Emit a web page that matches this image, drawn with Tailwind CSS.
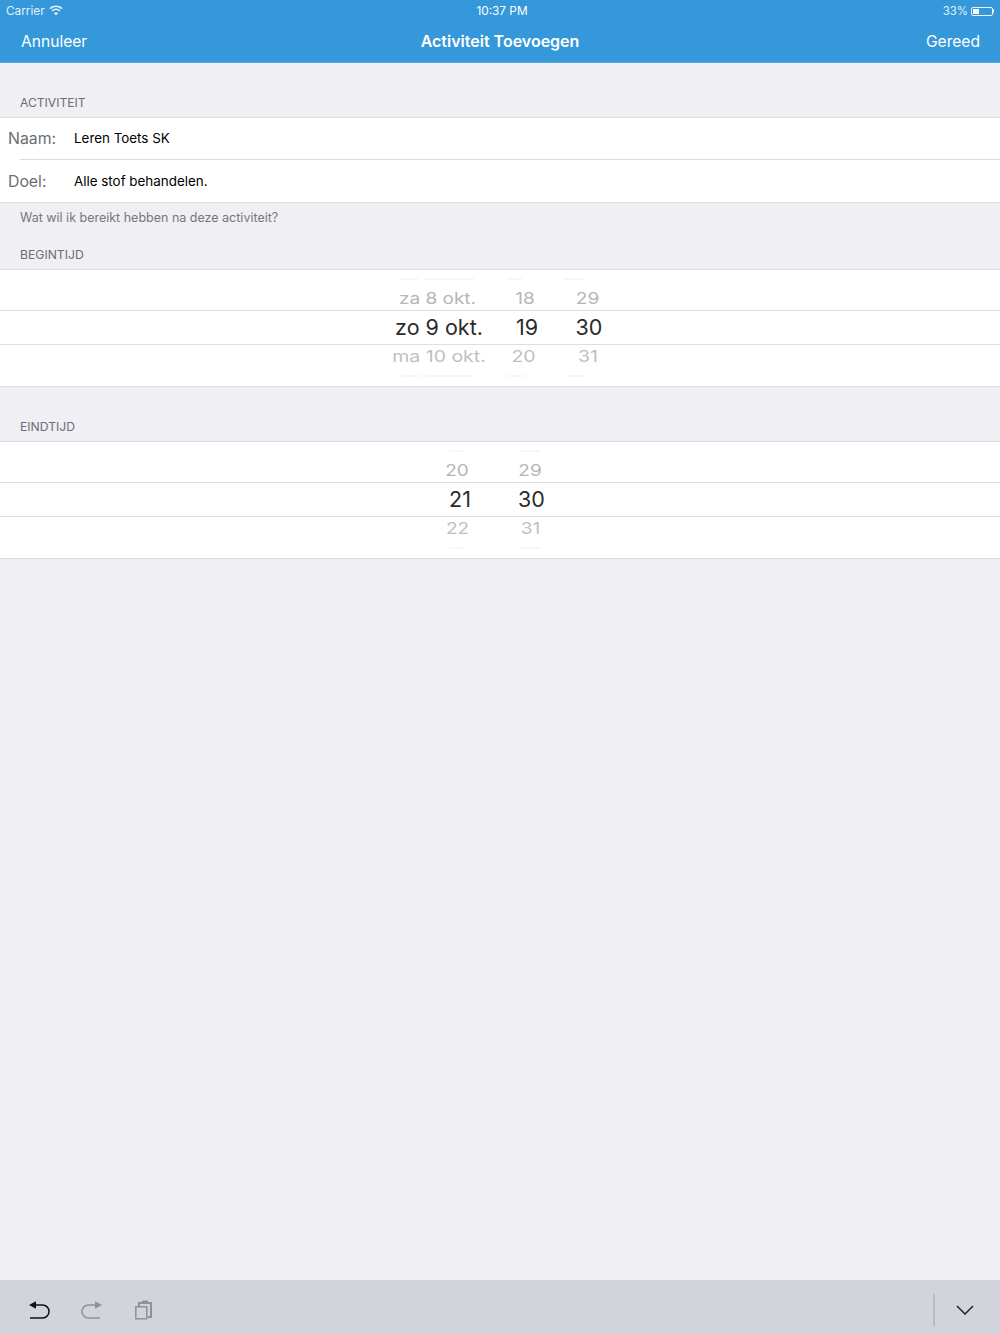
<!DOCTYPE html>
<html lang="en">
<head>
    <meta charset="UTF-8" />
    <title>Activiteit Toevoegen</title>
    <script src="https://cdn.jsdelivr.net/npm/@tailwindcss/browser@4"></script>
</head>
<body class="bg-[#efeff4] font-['Inter','Liberation_Sans',sans-serif]">
<div class="w-[1000px] h-[1334px] flex flex-col overflow-hidden">
    <!-- nav bar -->
    <header class="bg-[#3498db] h-[63px] shrink-0 text-white border-b border-[#5ba9e0]">
        <div class="h-[22px] grid grid-cols-3 items-center pl-[6px] pr-[6px] text-[11.8px] leading-[20px] text-[#e3f0fa]">
            <div class="flex items-center gap-[4px]">
                <span>Carrier</span>
                <svg width="14" height="11" viewBox="0 0 14 11" fill="none" stroke="#e8f3fb" stroke-width="1.5" class="-mt-[2px]">
                    <path d="M1 3.6C4.5.6 9.500.6 13 3.600" />
                    <path d="M3.100 5.800c2.400-2 5.400-2 7.800 0" />
                    <path d="M7 10.500 5 8c1.200-.9 2.800-.9 4 0z" fill="#e8f3fb" stroke="none" />
                </svg>
            </div>
            <div class="text-center text-white pl-[4px]">10:37 PM</div>
            <div class="flex items-center justify-end gap-[3px]">
                <span class="text-[11.4px]">33%</span>
                <div class="w-[22px] h-[9px] border border-[#e8f3fb] rounded-[2px] p-[1px]">
                    <div class="w-[6px] h-full bg-white"></div>
                </div>
                <div class="w-[1px] h-[4px] bg-[#e8f3fb] -ml-[3px]"></div>
            </div>
        </div>
        <div class="h-[38px] grid grid-cols-3 items-center px-[20px] text-[15.6px]">
            <div class="pl-[1px] pt-[2px]">Annuleer</div>
            <div class="text-center text-[16px] font-semibold whitespace-nowrap">Activiteit Toevoegen</div>
            <div class="text-right pt-[2px]">Gereed</div>
        </div>
    </header>

    <main class="flex-1">
        <div class="pt-[32px] pl-[20px] h-[54px] text-[12.1px] leading-[16px] text-[#6d6d72]">ACTIVITEIT</div>
        <section class="bg-white border-y border-[#dcdce0]">
            <div class="h-[42px] flex items-center pl-[8px] pb-[2px] relative">
                <span class="w-[66px] pt-[2px] text-[15.8px] text-[#6d6d72]">Naam:</span>
                <span class="text-[13.4px] text-black">Leren Toets SK</span>
                <div class="absolute left-[20px] right-0 bottom-0 h-px bg-[#dcdce0]"></div>
            </div>
            <div class="h-[42px] flex items-center pl-[8px]">
                <span class="w-[66px] pt-[2px] text-[15.8px] text-[#6d6d72]">Doel:</span>
                <span class="text-[13.4px] text-black">Alle stof behandelen.</span>
            </div>
        </section>
        <div class="h-[30px] pl-[20px] pt-[7px] text-[12.5px] leading-[16px] text-[#77777c]">Wat wil ik bereikt hebben na deze activiteit?</div>

        <div class="h-[36px] pt-[14px] pl-[20px] text-[12.2px] leading-[16px] text-[#6d6d72]">BEGINTIJD</div>
        <section class="bg-white border-y border-[#dcdce0] h-[118px] flex flex-col overflow-hidden">
            <div class="h-[40px] shrink-0 flex flex-col pt-[8px] text-[19px] leading-[24px] text-[#b5b5b8]">
                <div class="h-[2px] shrink-0 pl-[400px] flex gap-[6px]">
                    <div class="w-[18px] bg-[#f7f7f8]"></div>
                    <div class="w-[50px] bg-[#f7f7f8]"></div>
                    <div class="w-[16px] ml-[26px] bg-[#f7f7f8]"></div>
                    <div class="w-[20px] ml-[36px] bg-[#f7f7f8]"></div>
                </div>
                <div class="mt-[7px] shrink-0 pl-[377px] grid grid-cols-[121px_54px_71px]">
                    <span class="text-center scale-y-[0.85]">za 8 okt.</span>
                    <span class="text-center scale-y-[0.85]">18</span>
                    <span class="text-center scale-y-[0.85]">29</span>
                </div>
            </div>
            <div class="h-[35px] shrink-0 border-y border-[#dedee2] pl-[380px] grid grid-cols-[118px_58px_66px] items-center text-[21.5px] text-[#2b2b2d]">
                <span class="text-center">zo 9 okt.</span>
                <span class="text-center">19</span>
                <span class="text-center">30</span>
            </div>
            <div class="h-[41px] shrink-0 flex flex-col text-[19.5px] leading-[24px] text-[#c0c0c3]">
                <div class="-mt-[1px] pl-[380px] grid grid-cols-[118px_51px_78px]">
                    <span class="text-center scale-y-[0.85]">ma 10 okt.</span>
                    <span class="text-center scale-y-[0.85]">20</span>
                    <span class="text-center scale-y-[0.85]">31</span>
                </div>
                <div class="mt-[7px] h-[2px] shrink-0 pl-[402px] flex gap-[6px]">
                    <div class="w-[18px] bg-[#f7f7f8]"></div>
                    <div class="w-[48px] bg-[#f7f7f8]"></div>
                    <div class="w-[16px] ml-[28px] bg-[#f7f7f8]"></div>
                    <div class="w-[20px] ml-[36px] bg-[#f7f7f8]"></div>
                </div>
            </div>
        </section>

        <div class="h-[54px] pt-[32px] pl-[20px] text-[12.2px] leading-[16px] text-[#6d6d72]">EINDTIJD</div>
        <section class="bg-white border-y border-[#dcdce0] h-[118px] flex flex-col overflow-hidden">
            <div class="h-[40px] shrink-0 flex flex-col pt-[8px] text-[19px] leading-[24px] text-[#b5b5b8]">
                <div class="h-[2px] shrink-0 pl-[449px] flex">
                    <div class="w-[16px] bg-[#f7f7f8]"></div>
                    <div class="w-[20px] ml-[55px] bg-[#f7f7f8]"></div>
                </div>
                <div class="mt-[7px] shrink-0 pl-[430px] grid grid-cols-[54px_92px]">
                    <span class="text-center scale-y-[0.85]">20</span>
                    <span class="text-center scale-y-[0.85]">29</span>
                </div>
            </div>
            <div class="h-[35px] shrink-0 border-y border-[#dedee2] pl-[430px] grid grid-cols-[60px_83px] items-center text-[21.5px] text-[#2b2b2d]">
                <span class="text-center">21</span>
                <span class="text-center">30</span>
            </div>
            <div class="h-[41px] shrink-0 flex flex-col text-[19px] leading-[24px] text-[#c0c0c3]">
                <div class="pl-[430px] grid grid-cols-[55px_91px]">
                    <span class="text-center scale-y-[0.85]">22</span>
                    <span class="text-center scale-y-[0.85]">31</span>
                </div>
                <div class="mt-[6px] h-[2px] shrink-0 pl-[449px] flex">
                    <div class="w-[16px] bg-[#f7f7f8]"></div>
                    <div class="w-[20px] ml-[55px] bg-[#f7f7f8]"></div>
                </div>
            </div>
        </section>
    </main>

    <!-- keyboard accessory bar -->
    <footer class="h-[54px] shrink-0 bg-[#d1d5db] flex items-center pt-[6px] pl-[27px] pr-[27px]">
        <svg width="24" height="24" viewBox="0 0 24 24" fill="none" stroke="#111" stroke-width="1.500">
            <path d="M6 7H15.500a6.500 6.500 0 0 1 0 13H3" />
            <path d="M2 7 9 3.200v7.600z" fill="#111" stroke="none" />
        </svg>
        <svg width="24" height="24" viewBox="0 0 24 24" fill="none" stroke="#8f9296" stroke-width="1.500" class="ml-[29px]">
            <path d="M17 7H8.500a6.500 6.500 0 0 0 0 13H20" />
            <path d="M22 7 15 3.200v7.600z" fill="#8f9296" stroke="none" />
        </svg>
        <svg width="20" height="24" viewBox="0 0 20 24" fill="none" stroke="#8f9296" stroke-width="1.500" class="ml-[30px]">
            <rect x="1.800" y="8.800" width="11" height="12" />
            <path d="M5 8V5H17V19H14" stroke-width="2" />
            <rect x="8" y="2.500" width="6" height="2.500" fill="#8f9296" stroke="none" />
        </svg>
        <div class="ml-auto w-[2px] h-[32px] bg-[#b9bcc1]"></div>
        <svg width="18" height="10" viewBox="0 0 18 10" fill="none" stroke="#222" stroke-width="1.500" class="ml-[21px] -mr-[1px]">
            <path d="M1 1l8 8 8-8" />
        </svg>
    </footer>
</div>
</body>
</html>
